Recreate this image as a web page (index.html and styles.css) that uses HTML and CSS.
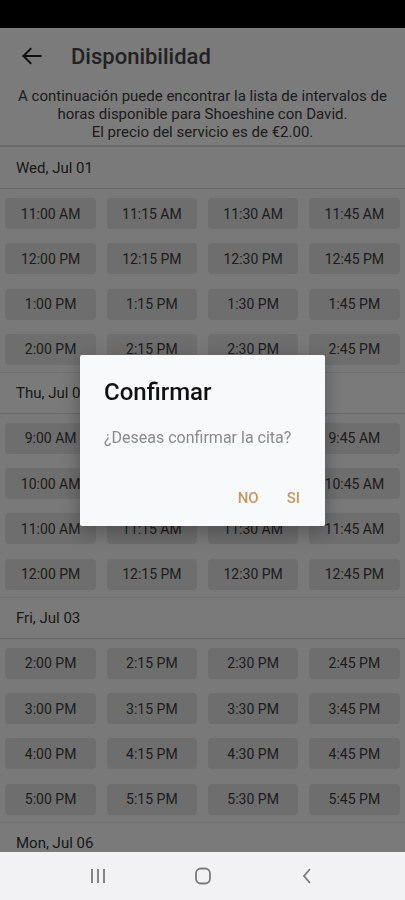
FILE: index.html
```html
<!DOCTYPE html>
<html>
<head>
  <meta charset="utf-8">
  <title>Disponibilidad</title>
  <link rel="stylesheet" href="styles.css">
</head>
<body>

<div class="status-bar"></div>

<main class="screen">
  <header class="app-bar">
    <svg class="back" width="24" height="24" viewBox="0 0 24 24">
      <path d="M20.5 12H3.5M10.5 5l-7 7 7 7" fill="none" stroke="#222" stroke-width="2" stroke-linecap="square"/>
    </svg>
    <h1>Disponibilidad</h1>
  </header>

  <p class="intro">
    A continuación puede encontrar la lista de intervalos de horas disponible para Shoeshine con David.<br>
    El precio del servicio es de €2.00.
  </p>

  <section class="day">
    <div class="day-title">Wed, Jul 01</div>
    <div class="slots">
      <button>11:00 AM</button><button>11:15 AM</button><button>11:30 AM</button><button>11:45 AM</button>
      <button>12:00 PM</button><button>12:15 PM</button><button>12:30 PM</button><button>12:45 PM</button>
      <button>1:00 PM</button><button>1:15 PM</button><button>1:30 PM</button><button>1:45 PM</button>
      <button>2:00 PM</button><button>2:15 PM</button><button>2:30 PM</button><button>2:45 PM</button>
    </div>
  </section>

  <section class="day">
    <div class="day-title">Thu, Jul 02</div>
    <div class="slots">
      <button>9:00 AM</button><button>9:15 AM</button><button>9:30 AM</button><button>9:45 AM</button>
      <button>10:00 AM</button><button>10:15 AM</button><button>10:30 AM</button><button>10:45 AM</button>
      <button>11:00 AM</button><button>11:15 AM</button><button>11:30 AM</button><button>11:45 AM</button>
      <button>12:00 PM</button><button>12:15 PM</button><button>12:30 PM</button><button>12:45 PM</button>
    </div>
  </section>

  <section class="day">
    <div class="day-title">Fri, Jul 03</div>
    <div class="slots">
      <button>2:00 PM</button><button>2:15 PM</button><button>2:30 PM</button><button>2:45 PM</button>
      <button>3:00 PM</button><button>3:15 PM</button><button>3:30 PM</button><button>3:45 PM</button>
      <button>4:00 PM</button><button>4:15 PM</button><button>4:30 PM</button><button>4:45 PM</button>
      <button>5:00 PM</button><button>5:15 PM</button><button>5:30 PM</button><button>5:45 PM</button>
    </div>
  </section>

  <section class="day">
    <div class="day-title">Mon, Jul 06</div>
  </section>
</main>

<nav class="nav-bar">
  <svg width="20" height="20" viewBox="0 0 20 20">
    <path d="M4 3v14M10 3v14M16 3v14" stroke="#7a7a7a" stroke-width="1.8"/>
  </svg>
  <svg width="20" height="20" viewBox="0 0 20 20">
    <rect x="3" y="2.5" width="14" height="15" rx="5" fill="none" stroke="#7a7a7a" stroke-width="1.8"/>
  </svg>
  <svg width="20" height="20" viewBox="0 0 20 20">
    <path d="M13 3l-6 7 6 7" fill="none" stroke="#7a7a7a" stroke-width="1.8"/>
  </svg>
</nav>

<div class="scrim">
  <div class="dialog">
    <h2>Confirmar</h2>
    <p>¿Deseas confirmar la cita?</p>
    <div class="actions">
      <button>NO</button>
      <button>SI</button>
    </div>
  </div>
</div>

</body>
</html>
```

FILE: styles.css
```css
html, body { margin: 0; padding: 0; }
body {
  width: 405px; height: 900px; overflow: hidden;
  display: flex; flex-direction: column;
  font-family: Roboto, "Noto Sans", sans-serif;
  background: #f4f4f4; color: #333;
}

.status-bar { height: 28px; background: #000; flex: none; }

.screen { flex: 1; overflow: hidden; background: #f2f2f2; }

.app-bar { height: 56px; display: flex; align-items: center; padding-left: 20px; background: #f6f6f6; }
.app-bar .back { width: 24px; height: 24px; }
.app-bar h1 { margin: 0 0 0 27px; font-size: 22px; font-weight: 500; color: #444; }

.intro {
  margin: 0; padding: 3px 10px 4px; background: #f6f6f6;
  text-align: center; font-size: 15px; line-height: 18px; color: #3a3a3a;
  border-bottom: 2px solid #d4d4d4;
}

.day-title {
  height: 42px; padding-left: 16px; box-sizing: border-box;
  display: flex; align-items: center;
  font-size: 15px; color: #333; background: #f5f5f5;
  border-top: 1px solid #dedede; border-bottom: 1px solid #d2d2d2;
}
.day:first-of-type .day-title { border-top: none; }

.slots {
  display: grid; grid-template-columns: repeat(4, 1fr);
  column-gap: 10.6px; row-gap: 14.3px;
  padding: 9px 5.3px 7px;
}
.slots button {
  height: 31px; border: none; border-radius: 4px;
  background: #dcdcdc; color: #3a3a3a;
  font-family: inherit; font-size: 14px; padding: 0;
}

.nav-bar {
  height: 48px; flex: none; background: #f2f2f4;
  display: flex; justify-content: space-between; align-items: center;
  padding: 0 88px;
}

.scrim {
  position: fixed; top: 28px; left: 0; right: 0; bottom: 48px;
  background: rgba(0, 0, 0, 0.5);
  display: flex; align-items: center; justify-content: center;
}

.dialog {
  width: 245px; box-sizing: border-box;
  background: #f8f9fa; border-radius: 2px;
  padding: 23px 24px 10px;
  box-shadow: 0 6px 20px rgba(0, 0, 0, 0.3);
}
.dialog h2 { margin: 0; font-size: 24px; line-height: 28px; font-weight: 500; color: #111; }
.dialog p { margin: 22px 0 0; font-size: 16px; line-height: 20px; color: #8a8a8a; }
.actions { display: flex; justify-content: flex-end; gap: 12px; margin: 32px -18px 0 0; }
.actions button {
  height: 36px; padding: 0 8px; border: none; background: none;
  font-family: inherit; font-size: 15px; font-weight: 500; color: #c49b5e;
}
.actions button:last-child { margin-right: 11px; }
```
